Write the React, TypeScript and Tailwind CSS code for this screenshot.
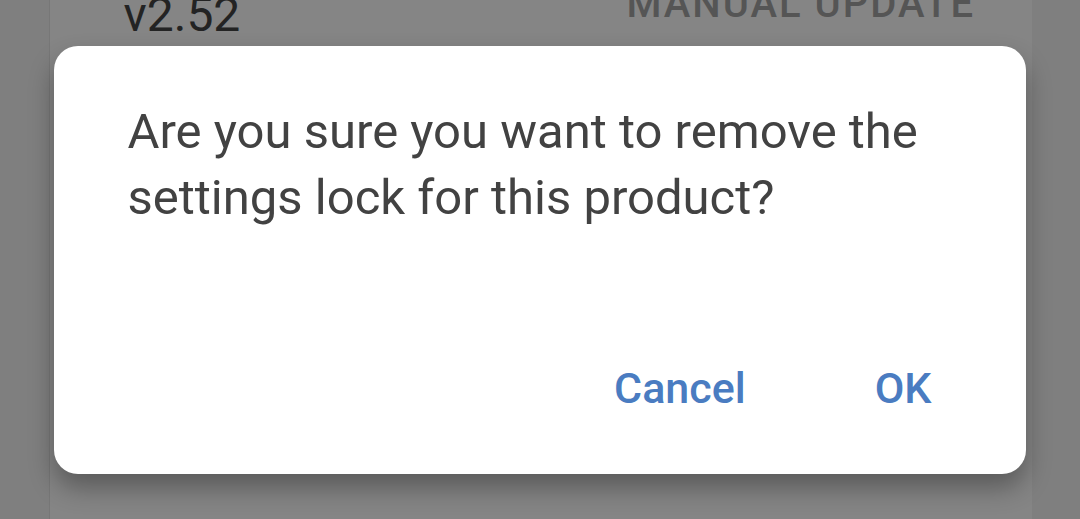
import React from 'react';

export default function App() {
    return (
        <div className="w-[1080px] h-[519px] overflow-hidden bg-[#7f7f7f] flex justify-center" style={{ fontFamily: 'Roboto, "Noto Sans", sans-serif' }}>
            {/* dimmed screen behind the dialog */}
            <div className="w-[983px] h-full bg-[#858585] border-l border-[#777] flex flex-col">
                <div className="h-[46px] flex items-end relative">
                    <span className="absolute left-[74px] top-[-13px] text-[48px] leading-[56px] text-[#232323]">v2.52</span>
                    <span className="absolute left-[577px] top-[-16px] text-[40px] leading-[40px] font-medium tracking-[2px] text-[#555]">MANUAL UPDATE</span>
                </div>

                {/* dialog */}
                <div className="ml-[4px] w-[972px] h-[428px] bg-white rounded-[24px] shadow-[0_14px_26px_rgba(0,0,0,0.32)] flex flex-col pl-[74px] pt-[53px]">
                    <p className="text-[49px] leading-[66px] text-[#424242] w-[830px]">
                        Are you sure you want to remove the settings lock for this product?
                    </p>
                    <div className="mt-[131px] flex justify-end pr-[94px] gap-[129px]">
                        <button className="text-[43px] leading-[52px] font-medium text-[#4a7cc1]">Cancel</button>
                        <button className="text-[43px] leading-[52px] font-medium text-[#4a7cc1]">OK</button>
                    </div>
                </div>
            </div>
        </div>
    );
}
